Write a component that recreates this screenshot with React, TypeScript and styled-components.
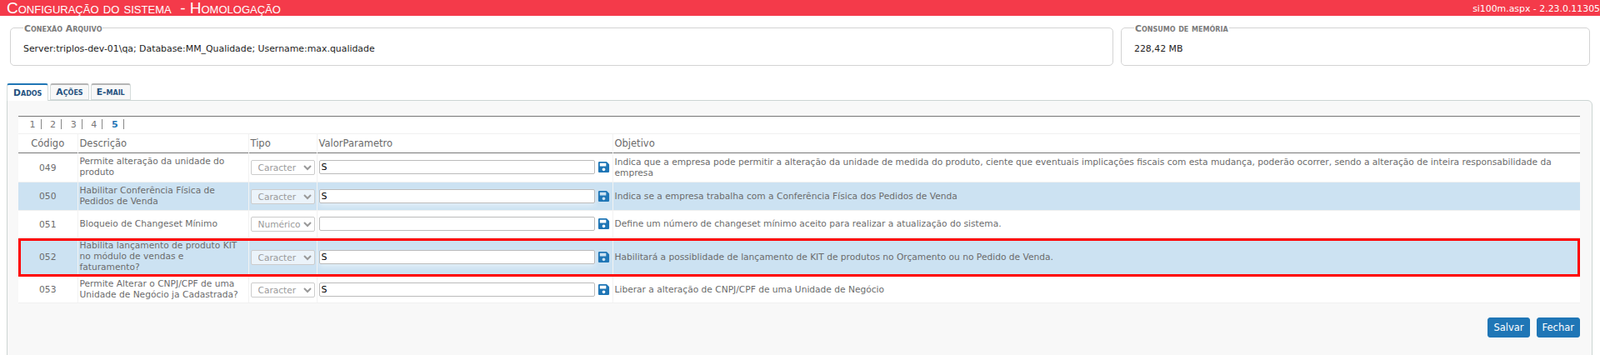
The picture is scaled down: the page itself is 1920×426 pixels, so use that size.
import styled, { createGlobalStyle } from 'styled-components'
import { FaSave } from 'react-icons/fa'

const rows = [
  { code: '049', height: 35, desc: 'Permite alteração da unidade do produto', type: 'Caracter', value: 'S', goal: 'Indica que a empresa pode permitir a alteração da unidade de medida do produto, ciente que eventuais implicações fiscais com esta mudança, poderão ocorrer, sendo a alteração de inteira responsabilidade da empresa' },
  { code: '050', height: 34, desc: 'Habilitar Conferência Física de Pedidos de Venda', type: 'Caracter', value: 'S', goal: 'Indica se a empresa trabalha com a Conferência Física dos Pedidos de Venda', alt: true },
  { code: '051', height: 33, desc: 'Bloqueio de Changeset Mínimo', type: 'Numérico', value: '', goal: 'Define um número de changeset mínimo aceito para realizar a atualização do sistema.' },
  { code: '052', height: 46, desc: 'Habilita lançamento de produto KIT no módulo de vendas e faturamento?', type: 'Caracter', value: 'S', goal: 'Habilitará a possiblidade de lançamento de KIT de produtos no Orçamento ou no Pedido de Venda.', alt: true, marked: true },
  { code: '053', height: 32, desc: 'Permite Alterar o CNPJ/CPF de uma Unidade de Negócio ja Cadastrada?', type: 'Caracter', value: 'S', goal: 'Liberar a alteração de CNPJ/CPF de uma Unidade de Negócio' },
]

const App = () => {
  return (
    <>
      <GlobalStyle />
      <TitleBar>
        <Title>Configuração do sistema&nbsp; - Homologação</Title>
        <Version>si100m.aspx - 2.23.0.11305</Version>
      </TitleBar>
      <InfoRow>
        <InfoBox>
          <InfoLegend>Conexão Arquivo</InfoLegend>
          <InfoText>Server:triplos-dev-01\qa; Database:MM_Qualidade; Username:max.qualidade</InfoText>
        </InfoBox>
        <MemoryBox>
          <InfoLegend>Consumo de memória</InfoLegend>
          <InfoText>228,42 MB</InfoText>
        </MemoryBox>
      </InfoRow>
      <Tabs>
        <Tab $active>Dados</Tab>
        <Tab>Ações</Tab>
        <Tab>E-mail</Tab>
      </Tabs>
      <Panel>
        <Grid>
          <colgroup>
            <col width={71} />
            <col width={205} />
            <col width={82} />
            <col width={355} />
            <col />
          </colgroup>
          <thead>
            <PagerRow>
              <td colSpan={5}>
                <Pager>
                  {[1, 2, 3, 4, 5].map((n) => (
                    <PageItem key={n} $current={n === 5}>{n}</PageItem>
                  ))}
                </Pager>
              </td>
            </PagerRow>
            <HeadRow>
              <CodeHead>Código</CodeHead>
              <th>Descrição</th>
              <th>Tipo</th>
              <th>ValorParametro</th>
              <th>Objetivo</th>
            </HeadRow>
          </thead>
          <tbody>
            {rows.map((r) => (
              <Row key={r.code} $height={r.height} $alt={r.alt} $marked={r.marked}>
                <CodeCell>{r.code}</CodeCell>
                <DescCell>{r.desc}</DescCell>
                <SelectCell>
                  <TypeSelect disabled defaultValue={r.type}>
                    <option>Caracter</option>
                    <option>Numérico</option>
                  </TypeSelect>
                </SelectCell>
                <ValueCell>
                  <ValueWrap>
                    <ValueInput defaultValue={r.value} />
                    <SaveIcon />
                  </ValueWrap>
                </ValueCell>
                <GoalCell>{r.goal}</GoalCell>
              </Row>
            ))}
          </tbody>
        </Grid>
        <Actions>
          <ActionButton>Salvar</ActionButton>
          <ActionButton>Fechar</ActionButton>
        </Actions>
      </Panel>
    </>
  )
}

const font = `"DejaVu Sans", Verdana, sans-serif`

const GlobalStyle = createGlobalStyle`
  html, body {
    margin: 0;
    height: 426px;
    overflow: hidden;
    background: #fff;
    font-family: ${font};
  }
`
const TitleBar = styled.div`
  height: 19px;
  background-color: #f43a4a;
  color: white;
  display: flex;
  align-items: center;
  justify-content: space-between;
  padding-left: 8px;
`
const Title = styled.div`
  font-family: "Liberation Sans", Arial, sans-serif;
  font-size: 19px;
  line-height: 19px;
  font-variant: small-caps;
  white-space: nowrap;
`
const Version = styled.div`
  padding-top: 1px;
  font-size: 10.9px;
  white-space: nowrap;
`
const InfoRow = styled.div`
  display: flex;
  gap: 9px;
  padding: 8px 12px 0 12px;
`
const InfoBox = styled.fieldset`
  flex: 0 0 1324px;
  box-sizing: border-box;
  height: 52px;
  margin: 0;
  padding: 0 15px;
  border: 1px solid #d3d3d3;
  border-radius: 5px;
`
const MemoryBox = styled(InfoBox)`
  flex: 1;
`
const InfoLegend = styled.legend`
  position: relative;
  top: 2px;
  padding: 0 1px;
  font-size: 10.8px;
  line-height: 12px;
  font-weight: bold;
  font-variant: small-caps;
  color: #7b7b7b;
`
const InfoText = styled.div`
  margin-top: 13px;
  font-size: 10.9px;
  line-height: 13px;
  color: #222;
`
const Tabs = styled.div`
  display: flex;
  gap: 2px;
  margin-top: 21px;
  padding-left: 8px;
  position: relative;
  z-index: 1;
  height: 20px;
`
const Tab = styled.div<{ $active?: boolean }>`
  box-sizing: border-box;
  height: ${(p) => (p.$active ? '21px' : '20px')};
  padding: 0 ${(p) => (p.$active ? '7px' : '6px')};
  display: flex;
  align-items: center;
  font-size: 10.8px;
  font-weight: bold;
  font-variant: small-caps;
  color: #24527f;
  background: ${(p) => (p.$active ? '#fff' : '#f8f8f8')};
  border: 1px solid #d5dcdb;
  border-bottom: ${(p) => (p.$active ? 'none' : '1px solid #d5dcdb')};
  border-top: 2px solid ${(p) => (p.$active ? '#1f76b6' : '#b5b5b5')};
  border-radius: 3px 3px 0 0;
`
const Panel = styled.div`
  box-sizing: border-box;
  margin: 0 9px 0 8px;
  height: 320px;
  padding: 18px 14px 0 13px;
  background: #f8f8f8;
  border: 1px solid #ccd5d3;
  border-radius: 0 6px 0 0;
`
const Grid = styled.table`
  width: 100%;
  table-layout: fixed;
  border-collapse: collapse;
  background: #fff;
  border-top: 1px solid #777;
  font-size: 10.65px;
  color: #6b6b6b;
  td, th {
    padding: 0;
  }
`
const PagerRow = styled.tr`
  height: 21px;
  border-bottom: 1px solid #f0f0f0;
`
const Pager = styled.div`
  display: flex;
  padding-left: 13px;
`
const PageItem = styled.span<{ $current?: boolean }>`
  width: 24.6px;
  box-sizing: border-box;
  padding-left: 0.5px;
  font-size: 11px;
  line-height: 14px;
  font-weight: ${(p) => (p.$current ? 'bold' : 'normal')};
  color: ${(p) => (p.$current ? '#1f76b6' : '#777')};
  &::after {
    content: '';
    display: inline-block;
    height: 12px;
    margin-left: 6px;
    vertical-align: -2px;
    border-right: 1px solid #888;
  }
`
const HeadRow = styled.tr`
  height: 23px;
  border-bottom: 1px solid #777;
  th {
    text-align: left;
    font-size: 11.5px;
    font-weight: normal;
    color: #6a6a6a;
    padding-left: 2px;
    border-left: 1px solid #f2f2f2;
  }
`
const CodeHead = styled.th`
  && {
    text-align: center;
    border-left: none;
    padding-left: 0;
  }
`
const Row = styled.tr<{ $alt?: boolean; $marked?: boolean; $height: number }>`
  height: ${(p) => p.$height}px;
  background: ${(p) => (p.$alt ? '#cce2f2' : '#fff')};
  border-bottom: 1px solid #f0f0f0;
  outline: ${(p) => (p.$marked ? '3px solid #f00' : 'none')};
  outline-offset: -3px;
  td {
    border-left: 1px solid #f2f2f2;
  }
`
const CodeCell = styled.td`
  && {
    border-left: none;
  }
  text-align: center;
`
const DescCell = styled.td`
  && {
    padding: 0 9px 2px 2px;
  }
  line-height: 13px;
`
const GoalCell = styled.td`
  && {
    padding: 0 2px 1px;
  }
  line-height: 13px;
`
const SelectCell = styled.td`
  text-align: center;
`
const TypeSelect = styled.select`
  width: 77px;
  height: 18px;
  font-family: ${font};
  font-size: 10.6px;
  color: #999;
  opacity: 1;
  padding: 0 0 0 4px;
  background: rgba(255, 255, 255, 0.6);
  border: 1px solid #ccc;
  border-radius: 2px;
  vertical-align: middle;
`
const ValueCell = styled.td`
  && {
    padding: 0 2px 1px;
  }
`
const ValueWrap = styled.div`
  display: flex;
  align-items: center;
  gap: 3px;
`
const ValueInput = styled.input`
  flex: 1;
  min-width: 0;
  box-sizing: border-box;
  height: 17px;
  padding: 0 2px;
  font-family: ${font};
  font-size: 11px;
  color: #000;
  background: #fff;
  border: 1px solid #bbb;
  border-radius: 2px;
  outline: none;
  box-shadow: 0 3px 6px rgba(255, 255, 255, 0.45);
`
const SaveIcon = styled(FaSave)`
  flex: none;
  width: 15px;
  height: 15px;
  margin-right: 1px;
  color: #1f76b6;
`
const Actions = styled.div`
  display: flex;
  justify-content: flex-end;
  gap: 8px;
  margin-top: 17px;
`
const ActionButton = styled.button`
  height: 24px;
  padding: 0 6px;
  font-family: ${font};
  font-size: 11.5px;
  color: #fff;
  background: #1f76b6;
  border: 1px solid #1f76b6;
  border-radius: 3px;
`

export default App
